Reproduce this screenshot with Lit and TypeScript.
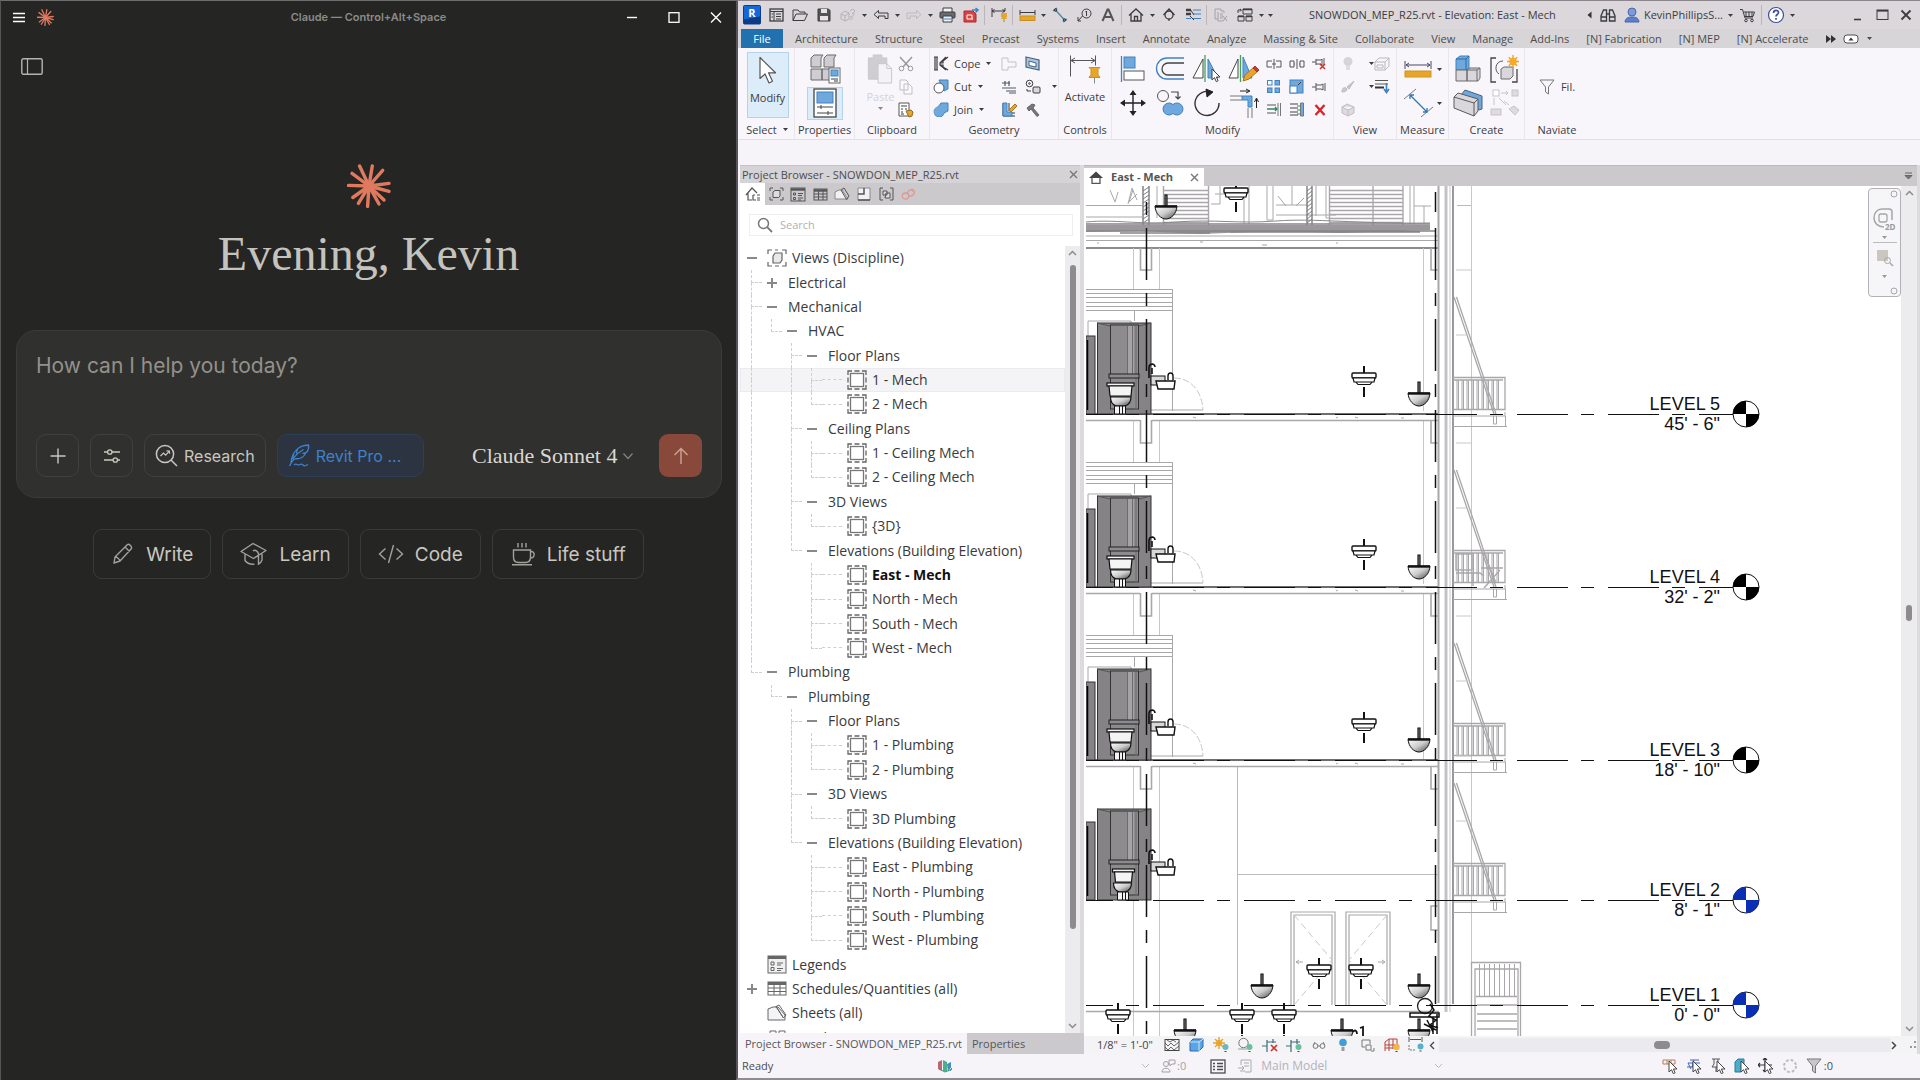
import { LitElement, html, svg, css, nothing, TemplateResult } from "lit";
import { customElement } from "lit/decorators.js";
import { classMap } from "lit/directives/class-map.js";

type Body = TemplateResult;

const icon = (w: number, h: number, body: Body) => html`<svg
  width=${w} height=${h} viewBox="0 0 ${w} ${h}" fill="none" stroke="currentColor" aria-hidden="true">${body}</svg>`;

const caret = html`<svg width="7" height="5" viewBox="0 0 7 5" aria-hidden="true"><path d="M1 1h5L3.500 4z" fill="currentColor"/></svg>`;

/* ---------- Claude icons ---------- */

const RAYS: [number, number][] = [
  [-9.4, -20], [3.3, -20], [13.7, -15.6], [20, -2.6], [20, 5.4], [15, 14],
  [10, 18], [-1.4, 20.4], [-10.6, 17.4], [-16.2, 11.5], [-20.6, -0.6], [-17, -12.6],
];
const sunburst = (size: number) => html`<svg width=${size} height=${size} viewBox="-22 -22 44 44" stroke="#e07a5f" fill="#e07a5f" stroke-width="3.4" stroke-linecap="round" aria-hidden="true">
  ${RAYS.map(([x, y]) => svg`<path d="M0 0L${x} ${y}"/>`)}<circle r="5.500" stroke="none"/></svg>`;

const C = {
  menu: icon(12, 11, svg`<path d="M0 1.500h12M0 5.500h12M0 9.500h12" stroke-width="1.600"/>`),
  min: icon(12, 11, svg`<path d="M1 5.500h10" stroke-width="1.400"/>`),
  max: icon(12, 11, svg`<rect x="1" y="0.700" width="10" height="9.600" stroke-width="1.300"/>`),
  close: icon(12, 11, svg`<path d="M1 .5l10 10M11 .5L1 10.500" stroke-width="1.400"/>`),
  sidebar: icon(22, 17, svg`<rect x=".8" y=".8" width="20.400" height="15.400" rx="1.500" stroke-width="1.400"/><path d="M6.500 1v15" stroke-width="1.200"/>`),
  plus: icon(18, 18, svg`<path d="M9 1.500v15M1.500 9h15" stroke-width="1.400"/>`),
  sliders: icon(18, 16, svg`<path d="M1 4h3.500M9 4h8M1 12h9M14.500 12H17" stroke-width="1.300"/><circle cx="6.800" cy="4" r="2.200" stroke-width="1.300"/><circle cx="12.300" cy="12" r="2.200" stroke-width="1.300"/>`),
  research: icon(23, 23, svg`<circle cx="10" cy="10" r="8.600" stroke-width="1.500"/><path d="M16.200 16.200L22 22" stroke-width="1.500"/><path d="M5.500 12l3-3 2.200 2.200 3.600-4M11.500 6.800l2.900.2.200 2.700" stroke-width="1.200"/>`),
  quill: icon(22, 23, svg`<path d="M3 18.500C4 9 9.500 1.500 20.500 1c.6 3-.4 5.500-2 7.500l-3 .8 1.700.7c-2 3.600-5.600 5-9.200 4.700-1.700.3-3 1.300-4 3L1.500 22M4.500 15C8 10.500 11 8 15.500 5.500M6 9.500l-1.600 4M9.500 5L8.300 9.500" stroke-width="1.300"/><path d="M6 21c2-2 3 0 4.500 0s2.500-2 4.500 0 3.500 0 5-.5" stroke-width="1.200"/>`),
  down: icon(12, 8, svg`<path d="M1.500 1.500L6 6.500l4.500-5" stroke-width="1.200"/>`),
  up: icon(16, 18, svg`<path d="M8 17V1.500M1.500 8L8 1.500 14.500 8" stroke-width="1.500"/>`),
  write: icon(24, 24, svg`<path d="M3 21l1-6L16.500 2.500c1.500-1 5 2.300 4 4L9 19zM14 5l4.500 4.500M4 15c1.500-.5 5 2.500 5 4" stroke-width="1.400" stroke-linejoin="round"/>`),
  learn: icon(28, 24, svg`<path d="M1 9.500L13 1.500l13 7-12.500 8zM5 12.500v6c2 2.700 6 4 9.500 3.600M22 12v6c-.6 1.700-1.600 3-3 3.700M13 9c2.500-2 5 .5 5.500 3v11" stroke-width="1.400" stroke-linejoin="round"/>`),
  code: icon(26, 22, svg`<path d="M7.500 5.500L1.500 11l6 5.500M18.500 5.500l6 5.500-6 5.500M15.500 2l-5 18" stroke-width="1.400"/>`),
  life: icon(26, 24, svg`<path d="M3.500 8h17v7c0 3.500-2 5.500-5 5.500H8.500c-3 0-5-2-5-5.500zM20.500 9.500c5-.8 5 6.500-.5 6.500M2 22.800h20M8 1v4.500M12 1v4.500M16 1v4.500" stroke-width="1.400"/>`),
};

/* ---------- Revit icons ---------- */

const B = "#6fa8dc";
const BD = "#3f83c2";
const OR = "#e7a52b";

const Q: Record<string, TemplateResult> = {
  logo: icon(18, 20, svg`<rect x=".5" y=".5" width="17" height="18.500" rx="1" fill="#1668d6" stroke="#0b3c98"/><path d="M1 14.500l16-3V19H1z" fill="#0b3a86" stroke="none"/><text x="9" y="12" font-size="11" font-weight="700" text-anchor="middle" fill="#fff" stroke="none">R</text>`),
  start: icon(15, 14, svg`<rect x="1" y="1" width="13" height="12" stroke-width="1.300"/><path d="M1 3.500h13M5 3.500V13M7 6h5M7 8.500h5M7 11h5M2.500 6h1.500M2.500 9h1.500" />`),
  open: icon(16, 14, svg`<path d="M1 12.500V2h5l1.500 2H13v2M1 12.500L4 6h11.500l-3 6.500z"/>`),
  save: icon(14, 14, svg`<path d="M1 1h10.500L13 2.500V13H1z" fill="#555"/><rect x="4" y="1" width="6" height="4" fill="#e6e4e7" stroke="none"/><rect x="3" y="8" width="8" height="4.500" fill="#e6e4e7" stroke="none"/>`),
  sync: icon(16, 14, svg`<g stroke="#b5b2b7"><path d="M1 6l4-3 4 2v6l-4 2-4-2zM1 6l4 2 4-3M5 8v5"/><path d="M10 3l3-2 2 2-3 3M10 9c3 0 4-2 4-4M10 12l3-2"/></g>`),
  undo: icon(16, 12, svg`<path d="M5.500 1.500L1 5.500l4.500 4V7H12v2.500h3V4H5.500z"/>`),
  redo: icon(16, 12, svg`<path d="M10.500 1.500L15 5.500l-4.500 4V7H4v2.500H1V4h9.500z" stroke="#bdbabf"/>`),
  print: icon(17, 16, svg`<path d="M4 5V1h9v4" fill="#f2f2f2"/><rect x="1" y="5" width="15" height="6" rx="1" fill="#6b6b6b"/><path d="M4 9h9v6H4z" fill="#e9f1f8"/><path d="M5 12h7" stroke="${BD}"/>`),
  pdf: icon(16, 16, svg`<path d="M1 4h9l3 3v8H1z" fill="#d64545" stroke="#b02a2a"/><path d="M4 8h5M4 12h6M4 8v4M9 8v4" stroke="#fff"/><path d="M9 3h6M12.500 1L15 3l-2.500 2.500" stroke="${BD}" stroke-width="1.500"/>`),
  dim: icon(17, 16, svg`<path d="M1 1v9M14 1v3M1 4h13M3.500 2.500L1 4l2.500 1.500M11.500 2.500L14 4l-2.500 1.500"/><path d="M10 6h6v4h-1l1 2h-6l1-2h-1z" fill="${OR}" stroke="none"/><path d="M13 12v3" stroke="#888"/>`),
  measure: icon(17, 12, svg`<path d="M1 1v5M16 1v5M1 3.500h15"/><rect x="1" y="7" width="15" height="4.500" fill="${OR}" stroke="#c98f1c"/>`),
  aligned: icon(16, 16, svg`<path d="M1 4l4-3M11 15l4-3M3 2.500l10 11" stroke="#4d86a8" stroke-width="1.300"/><circle cx="3.500" cy="3" r="1.300" fill="#4d86a8"/><circle cx="12.500" cy="13" r="1.300" fill="#4d86a8"/>`),
  tag: icon(15, 14, svg`<circle cx="9.500" cy="5.500" r="4.500"/><path d="M9.500 3v5M8.500 4l1-1M5.500 8L1 13M1 9v4h3"/>`),
  text: icon(14, 14, svg`<path d="M1.500 13L6.500 1.500h1L12.500 13M3.800 9h6.500" stroke="#555" stroke-width="2"/>`),
  home: icon(16, 14, svg`<path d="M1 7.500L8 1l7 6.500M3 6v7h10V6M6.500 13V8.500h3V13" stroke-width="1.300"/>`),
  section: icon(14, 14, svg`<circle cx="7" cy="7" r="4" stroke-width="1.300"/><path d="M1.500 7L7 1l5.500 6M7 11v2" stroke-width="1.200"/>`),
  thin: icon(17, 14, svg`<path d="M1 2h5M1 6h5" stroke-width="2.500"/><path d="M8 2h8M8 6h8M8 10.500h8M1 10.500h5" stroke="${BD}"/><path d="M5 1l4 6 M5 8l4 4"/>`),
  closeWin: icon(14, 14, svg`<g stroke="#a5a2a7"><path d="M1 1h6v2h3v2M1 1v10h3M4 4v9h5M6 6h3M6 8h3M6 10h3M9 8l4 5M13 8l-4 5"/></g>`),
  switchWin: icon(17, 14, svg`<path d="M6 1h9v5H6zM1 8h6v5H1zM9 8h6v5H9zM1 5V2h3M3 1l1.500 1L3 3.500"/><path d="M1 8.500h6M9 8.500h6M6 1.500h9" stroke-width="1.600"/>`),
  binoc: icon(16, 14, svg`<path d="M1 13V8l2.500-6h3v11zM15 13V8l-2.500-6h-3v11zM6.500 6h3M1 9h5.500M9.500 9H15" stroke-width="1.300"/>`),
  user: icon(16, 16, svg`<circle cx="8" cy="5" r="4" fill="#7d9bd8" stroke="#4a66a8"/><path d="M1 15c.5-4 3-5 7-5s6.500 1 7 5z" fill="#5b7fcb" stroke="#4a66a8"/>`),
  cart: icon(17, 15, svg`<path d="M1 1.500h2.500L6 10h8M4.500 4H15.500L14 8.500H6M7 4v4.500M10 4v4.500M13 4v4.500"/><circle cx="7" cy="12.500" r="1.300"/><circle cx="13" cy="12.500" r="1.300"/>`),
  help: icon(18, 18, svg`<circle cx="9" cy="9" r="7.500" fill="#fff" stroke="#3a4f9c" stroke-width="1.200"/><path d="M6.500 7c0-3.500 5-3.300 5-.5C11.500 8.500 9 8.500 9 10.500M9 12v1.700" stroke="#3a4f9c" stroke-width="1.700"/>`),
  wmin: icon(12, 12, svg`<path d="M2 10.500h7" stroke-width="1.600"/>`),
  wmax: icon(13, 12, svg`<rect x="1" y="1" width="11" height="9.500"/><path d="M1 1.800h11" stroke-width="1.600"/>`),
  wclose: icon(12, 12, svg`<path d="M1.500 1.500l9 9M10.500 1.500l-9 9" stroke-width="1.800"/>`),
};

const cursorPath = (x: number, y: number) => svg`<path transform="translate(${x} ${y})" d="M0 0v11l2.500-2.300 1.800 4 1.800-.9-1.700-3.800H8z" fill="#fff" stroke="#444"/>`;

const R: Record<string, TemplateResult> = {
  modify: icon(22, 30, svg`<path d="M3 2v21l5-4.500 4 9 3.500-1.700-4-8.500h7z" fill="#fff" stroke="#555" stroke-width="1.200" stroke-linejoin="round"/>`),
  families: icon(32, 30, svg`<g fill="#cfcdd1" stroke="#6a6a6a"><path d="M2 4l3-3h9l-2 3v9H2zM15 4l3-3h9l-2 3v9H15z"/><path d="M2 15h11v11H2zM13 15h10v11H13z"/></g><rect x="20" y="14" width="11" height="15" fill="#fff" stroke="#666"/><rect x="22" y="16" width="7" height="6" fill="${B}" stroke="${BD}"/><path d="M22 25h7M25 27h4"/>`),
  props: icon(24, 30, svg`<rect x="1" y="1" width="22" height="28" fill="#fff" stroke="#444" stroke-width="1.300"/><rect x="4" y="4" width="16" height="11" fill="${B}" stroke="${BD}"/><path d="M4 19h16M4 25h16M8 17v4M15 23v4" stroke="#444"/>`),
  paste: icon(26, 32, svg`<g stroke="#c9c7cc"><path d="M1 4h5V1h9v3h5v22H1z" fill="#cfcdd2"/><path d="M11 10h9l5 5v15H11z" fill="#f3f2f5"/><path d="M20 10v5h5"/></g>`),
  cut: icon(16, 16, svg`<path d="M2 1l9 10M14 1L5 11" stroke="#999" stroke-width="1.500"/><circle cx="3.500" cy="12.500" r="2.300" stroke="#999"/><circle cx="12.500" cy="12.500" r="2.300" stroke="#999"/>`),
  copyS: icon(14, 16, svg`<path d="M1 1h6l2 2v8H1zM5 5h5l3 3v7H5z" stroke="#c0bec3" fill="#fafafa"/>`),
  match: icon(16, 16, svg`<path d="M1 1h10v13H1z" fill="#fff" stroke="#555"/><path d="M3 4h6M3 7h2M3 10h2M7 7h2M3 12h3"/><path d="M8 9l5-1 2 2-1 4-3 1z" fill="${OR}" stroke="#8a6a20"/>`),
  cope: icon(16, 15, svg`<path d="M1 1h4M1 14h4M2 1v13M4 1v13M15 1l-5 4v2l-3 0v2h3v2l5 3M7 7L13 1M7 9l6 5" stroke-width="1.200"/>`),
  cutG: icon(16, 15, svg`<path d="M6 1h9v9l-4 2z" fill="${B}" stroke="${BD}"/><circle cx="6" cy="9" r="5" fill="#fff" stroke="#555"/>`),
  joinG: icon(16, 15, svg`<path d="M8 1h7v8l-4 2a5 5 0 1 1-6-6z" fill="${B}" stroke="${BD}"/><circle cx="6" cy="9.500" r="5" fill="${B}" stroke="none"/>`),
  g1: icon(16, 14, svg`<path d="M1 1h6v4h8v5H7v3H1z" stroke="#c3c1c6"/>`),
  g2: icon(16, 14, svg`<path d="M1 3h8M4 1v5M8 1v5M1 8h14M5 11h10M8 13h7" stroke="#4a5a6a" stroke-width="1.200"/>`),
  g3: icon(17, 16, svg`<path d="M2 1v13h12M5 3v8h9M8 1v8" stroke="#333"/><path d="M2 1v13h9v-4H6V1z" fill="${B}" stroke="${BD}"/><path d="M8 8l6-6 2 2-6 6z" fill="${OR}" stroke="#a87520"/>`),
  g4: icon(15, 15, svg`<path d="M1 1l13 3v10L1 11z" fill="#a9c7e4" stroke="#47617c" stroke-width="1.200"/><path d="M4 5l7 2v4l-7-1.500z" fill="#fff" stroke="#47617c"/>`),
  g5: icon(16, 15, svg`<circle cx="4.500" cy="4.500" r="3.300"/><circle cx="4.500" cy="4.500" r=".8"/><rect x="8" y="8" width="7" height="6" rx="1" fill="#d9d7dc"/><path d="M2 10v2h4"/>`),
  hammer: icon(14, 14, svg`<path d="M1 5l5-4 3 1-2 3 6 7-2 1.500L5 6 3 8z" fill="#777" stroke="#666"/>`),
  activate: icon(32, 30, svg`<path d="M1.500 1v21M26.500 1v10M2 6h24M6 3.500L2 6l4 2.500M22 3.500L26 6l-4 2.500" stroke="#555"/><path d="M20 13h11l-2 2v5l2 3H20l2-3v-5z" fill="${OR}" stroke="#d09018"/><path d="M25.500 23v6" stroke="#888"/>`),
  align: icon(26, 28, svg`<path d="M1.500 1v26" stroke="${BD}" stroke-width="1.300"/><rect x="4" y="2" width="11" height="11" fill="${B}" stroke="${BD}"/><rect x="4" y="16" width="20" height="9" fill="#fff" stroke="#555"/>`),
  offset: icon(30, 26, svg`<path d="M29 2H12a10.500 10.500 0 0 0 0 21h17" stroke="${BD}" stroke-width="1.300"/><path d="M29 7H13a6 6 0 0 0 0 12h16" stroke="#444" stroke-width="1.300"/>`),
  mirrorP: icon(30, 30, svg`<path d="M11 5v19H1z" stroke="#444" fill="#fff"/><path d="M13 1v27" stroke="#3fa35b" stroke-width="1.300"/><path d="M16 5l10 19H16z" fill="${B}" stroke="${BD}"/>${cursorPath(20, 15)}`),
  mirrorD: icon(32, 30, svg`<path d="M10 5v19H1z" stroke="#444" fill="#fff"/><path d="M12.500 1v27" stroke="#3fa35b" stroke-width="1.300"/><path d="M15 3l9 21h-9z" fill="${B}" stroke="${BD}"/><path d="M15 27l2-6 9-8 4 4-9 8z" fill="${OR}" stroke="#a87520"/><path d="M25 14l2-2 4 4-2 2z" fill="#c43c3c" stroke="#a33"/>`),
  move: icon(26, 26, svg`<path d="M13 4v18M4 13h18" stroke="#222" stroke-width="1.400"/><path d="M13 0l3.500 5h-7zM13 26l-3.500-5h7zM0 13l5-3.500v7zM26 13l-5 3.500v-7z" fill="#222" stroke="none"/>`),
  copy: icon(28, 28, svg`<circle cx="7" cy="7" r="5.500" stroke="#555"/><path d="M15 3h7v7M19.500 7.500L22 10l2.500-2.500" stroke="#444" stroke-width="1.200"/><path d="M7 20a6 6 0 0 1 10-4.500A6 6 0 1 1 17 24.500 6 6 0 0 1 7 20z" fill="${B}" stroke="${BD}"/>`),
  rotate: icon(28, 30, svg`<path d="M19 4.500A12 12 0 1 0 26 15" stroke="#333" stroke-width="1.400"/><path d="M13 1l7 3-6 5z" fill="#222" stroke="#222"/>`),
  trim: icon(30, 30, svg`<path d="M11 3h9M17 1l4 2-4 2" stroke="#222"/><path d="M1 8h12M1 12h12M19 20v10M23 20v10" stroke="#777"/><path d="M13 8h10v11h-4v-7h-6z" fill="${B}" stroke="${BD}"/><path d="M27.500 20v-9M25.500 14l2-4 2 4" stroke="#222"/>`),
  s1: icon(16, 10, svg`<path d="M6 2H1v6h5M10 2h5v6h-5M8 0v10M6 5h4" stroke="#555"/>`),
  s2: icon(16, 10, svg`<path d="M1 2h4v6H1zM11 2h4v6h-4zM8 0v10M5 5h1M10 5h1" stroke="#555"/>`),
  s3: icon(16, 14, svg`<path d="M0 5h4M4 2v6M4 3h5l1-1v6l-1-1H4M12 1v7" stroke="#555"/><path d="M8 7l5 5M13 7l-5 5" stroke="#d32f2f" stroke-width="1.500"/>`),
  s4: icon(15, 15, svg`<rect x="1.500" y="1.500" width="4.500" height="4.500" fill="#fff" stroke="${BD}"/><g fill="${B}" stroke="${BD}"><rect x="9" y="1.500" width="4.500" height="4.500"/><rect x="1.500" y="9" width="4.500" height="4.500"/><rect x="9" y="9" width="4.500" height="4.500"/></g>`),
  s5: icon(15, 15, svg`<rect x="1" y="1" width="13" height="13" fill="${B}" stroke="${BD}"/><rect x="1" y="7" width="7" height="7" fill="#fff" stroke="${BD}"/><path d="M9 6l3-3"/>`),
  s6: icon(16, 12, svg`<path d="M0 6h4M4 2v8M4 4h5l2-1v6l-2-1H4M13 2v8" stroke="#555"/>`),
  s7: icon(16, 15, svg`<path d="M1 3h9M1 11h9" stroke="#555"/><path d="M1 7h10M9 5l2 2-2 2" stroke="#2d8a5b" stroke-width="1.300"/><path d="M12 1v13M14.500 1v13" stroke="#777"/>`),
  s8: icon(16, 15, svg`<path d="M1 2h8M1 6h8M1 10h8M1 13h8" stroke="#444"/><path d="M8 4h3M8 8h3M8 12h3" stroke="#2d8a5b"/><path d="M11.500 1h3v13h-3z" fill="${B}" stroke="#777"/>`),
  s9: icon(12, 12, svg`<path d="M1.500 1l9 10M10.500 1l-9 10" stroke="#d7262b" stroke-width="2.400"/>`),
  bulb: icon(12, 15, svg`<circle cx="6" cy="5.500" r="4.500" fill="#d6d4d9" stroke="none"/><path d="M4 11h4M4 13h4" stroke="#c6c4c9"/>`),
  box: icon(16, 14, svg`<path d="M1 5l4-4h10v8l-4 4H1zM1 5h10l4-4M11 5v8M3 8h6v3H3z" stroke="#b9b7bc"/>`),
  brush: icon(14, 13, svg`<path d="M1 12c0-4 2-5 4-4s1 4-4 4zM6 7l7-6-5 8z" fill="#c9c7cc" stroke="#bbb"/>`),
  linew: icon(16, 15, svg`<path d="M1 1.500h13M1 5h13" stroke="#555"/><path d="M1 8.500h9" stroke="#333" stroke-width="2"/><path d="M12.500 4v9M10 10l2.500 3.500L15 10" stroke="${BD}" stroke-width="1.600"/>`),
  cube: icon(14, 14, svg`<path d="M1 4l5-3 7 3v6l-6 3-6-3zM1 4l6 3 6-3M7 7v6" fill="#dddbe0" stroke="#bfbdc2"/>`),
  ruler: icon(28, 18, svg`<path d="M1 1v8M27 1v8M2 5h24M5 3L2 5l3 2M23 3l3 2-3 2" stroke="#47476a"/><rect x="1" y="11" width="26" height="6" fill="${OR}" stroke="#cf941f"/>`),
  diag: icon(32, 32, svg`<path d="M2 12l12-10M19 30l12-10" stroke="#777"/><path d="M8 8l17 17M8 12V8h4M21 25h4v-4" stroke="#2f78b7" stroke-width="1.300"/>`),
  create1: icon(28, 28, svg`<path d="M2 4l4-3h9v12l-3 2H2z" fill="${B}" stroke="${BD}"/><path d="M2 4h10v11M12 4l3-3" stroke="#2b6aa8"/><path d="M2 15h11v11H2zM13 15l3-2h10v10l-2 3H13z" fill="#d9d7db" stroke="#6a6a6a"/><path d="M13 15h10l3-2M23 15v11" stroke="#6a6a6a"/>`),
  create2: icon(30, 28, svg`<path d="M6 3H1v24h5M22 27h5V14" stroke="#444" stroke-width="1.300"/><path d="M13 6c-8 0-9 10-4 13" stroke="#555"/><path d="M11 14l3-2h9v9l-3 3h-9z" fill="#d9d7db" stroke="#6a6a6a"/><path d="M23 0v13M17 6.500h12M18.800 2.300l8.400 8.400M27.200 2.300l-8.400 8.400" stroke="#f0a02c" stroke-width="1.400"/><circle cx="23" cy="6.500" r="3.700" fill="#f7a928" stroke="none"/>`),
  create3: icon(30, 28, svg`<path d="M8 6L12 1l17 6v13l-3 1z" fill="${B}" stroke="#47617c"/><path d="M1 8l20 6v13L1 19zM1 8l4-4 20 6v12l-4 5M21 14l4-4" fill="#d9d7db" stroke="#5a5a5a"/>`),
  create4: icon(30, 28, svg`<g stroke="#c6c4c9" fill="#dddbe0"><rect x="3" y="1" width="6" height="6" fill="#fff"/><path d="M11 4h7M16 2l2 2-2 2" fill="none"/><rect x="22" y="1" width="6" height="6"/><path d="M4 9v7M9 9l7 7" fill="none"/><rect x="1" y="20" width="10" height="6"/><path d="M19 20l5-3 5 4-4 5z"/><path d="M14 12l5 4"/></g>`),
  funnel: icon(16, 16, svg`<path d="M1 1h14L9.500 8v7L6.500 13V8z" stroke="#777"/>`),
};

const P: Record<string, TemplateResult> = {
  house: icon(16, 14, svg`<path d="M1 8l6-7 5 5M3 6v7h4M8 8h2M8 8v5h3M12 8h3M12 11h3M12 13h3" stroke-width="1.200"/>`),
  views: icon(15, 14, svg`<path d="M1 4V1h3M11 1h3v3M14 10v3h-3M4 13H1v-3"/><path d="M4 5l2-1.500h5V9l-1.500 1.500H4z" fill="#ddd"/>`),
  legend: icon(16, 15, svg`<rect x="1" y="1" width="14" height="13"/><path d="M1 2.500h14" stroke-width="2.400"/><path d="M3.500 6h2v2h-2zM3.500 10.500h2v2h-2zM8 6.500h5M8 8.500h4M8 11h5M8 13h3"/>`),
  schedule: icon(15, 13, svg`<rect x="1" y="1" width="13" height="11"/><path d="M1 2.500h13" stroke-width="2.400"/><path d="M1 6h13M1 9h13M5.500 3v9M10 3v9"/>`),
  sheet: icon(16, 14, svg`<path d="M1 12V5l4-2h3l6 9z" fill="#f2f1f3" stroke="#8a888c"/><path d="M7 3l3-2 5 8-2.500 3.500z"/>`),
  family: icon(14, 14, svg`<path d="M1 1h12v12H1z" fill="#f2f1f3" stroke="#8a888c"/><path d="M1 7h6V1M1 13h12" stroke-width="1.500"/>`),
  group: icon(15, 14, svg`<path d="M4 1H1v12h3M11 1h3v12h-3"/><path d="M4 4h4v4H4zM7 6h4v5H6z" fill="#ddd"/>`),
  link: icon(15, 12, svg`<g stroke="#dd9a95" stroke-width="1.300"><ellipse cx="4.500" cy="8" rx="3.300" ry="3"/><path d="M6 6.500C7 1 13 0 13.500 3.500S9 9 8 7.500M10 1l2 3"/></g>`),
  search: icon(16, 16, svg`<circle cx="6.500" cy="6.500" r="5" stroke-width="1.500"/><path d="M10.200 10.200L15 15" stroke-width="1.800"/>`),
  viewsBig: icon(20, 18, svg`<path d="M1 5V1h4M8 1h3M15 1h4v4M19 13v4h-4M12 17H8M5 17H1v-4" stroke-width="1.200"/><path d="M6 7l2-3h7v7l-2 3H6z" fill="#e9e8ea" stroke-width="1.200"/>`),
  view: icon(20, 20, svg`<path d="M1 5V1h4M15 1h4v4M19 15v4h-4M5 19H1v-4M7.500 1h5M7.500 19h5M1 7.500v5M19 7.500v5" stroke="#666" stroke-width="1.300"/><rect x="3.500" y="3.500" width="13" height="13" stroke="#777" stroke-width="1.300" fill="#fff"/>`),
  legendBig: icon(20, 19, svg`<rect x="1" y="1" width="18" height="17" fill="#f0eff1"/><path d="M1 2.500h18" stroke-width="3"/><path d="M4 7h3v3H4zM4 12.500h3v3H4zM10 8h6M10 10h4M10 13.500h6M10 15.500h4"/>`),
  scheduleBig: icon(20, 16, svg`<rect x="1" y="1" width="18" height="13"/><path d="M1 2.500h18" stroke-width="3"/><path d="M1 7h18M1 10.500h18M7 3v11M13 3v11"/>`),
  sheetBig: icon(20, 18, svg`<path d="M1 16V5l5-2h5l7 8v5z" fill="#f4f3f5"/><path d="M9 2.500l3-1.500 7 10-2.500 3zM9 2.500L16.500 14"/>`),
  familyBig: icon(20, 16, svg`<path d="M3 1h6v14H3zM12 1h6v14h-6zM3 6h6M12 6h6"/>`),
};

const V: TemplateResult[] = [
  icon(16, 14, svg`<rect x="1" y="1.500" width="14" height="11"/><path d="M1 5l3 3 3-3 3 3 5-4M1 9l3 3 3-3 3 3 5-4M3 2l3 2 3-2 3 2" stroke-width=".8"/>`),
  icon(15, 14, svg`<path d="M1 4l3-3h10v8l-4 4H1z" fill="#5aa5e6" stroke="#2f6ba8"/><path d="M1 4h9v9M10 4l4-3" stroke="#cfe5f8"/>`),
  icon(17, 16, svg`<path d="M6 0v12M0 6h12M2 2l8 8M10 2l-8 8" stroke="#e7a52b" stroke-width="1.400"/><circle cx="6" cy="6" r="3" fill="#e7a52b" stroke="none"/><circle cx="12.500" cy="10" r="3" fill="#6bb6c4" stroke="none"/><path d="M11.500 14.500h2"/>`),
  icon(17, 16, svg`<circle cx="6.500" cy="6" r="4.700" stroke="#777"/><path d="M1 12h9" stroke="#999"/><circle cx="12.500" cy="10" r="3" fill="#6bbf9f" stroke="none"/><path d="M11.500 14.500h2"/>`),
  icon(17, 16, svg`<path d="M0 9h5V5h9M5 3v12M11 2v4" stroke="#3d6d77" stroke-width="1.200"/><path d="M9 8l6 6M15 8l-6 6" stroke="#d32f2f" stroke-width="1.700"/>`),
  icon(17, 16, svg`<path d="M0 9h5V5h9M5 3v12M11 2v5" stroke="#3d6d77" stroke-width="1.200"/><circle cx="12.500" cy="10" r="3" fill="#6bbf9f" stroke="none"/><path d="M11.500 14.500h2"/>`),
  icon(14, 8, svg`<g stroke="#777"><circle cx="3.500" cy="5" r="2.400"/><circle cx="10.500" cy="5" r="2.400"/><path d="M6 5h2M1.500 3.500L3 1M12.500 3.500L11 1"/></g>`),
  icon(10, 14, svg`<circle cx="5" cy="4.500" r="3.800" fill="#3f9fd8" stroke="none"/><path d="M3.500 10h3M3.500 12h3"/>`),
  icon(14, 13, svg`<path d="M1 1h8v4M1 1v7h3M5 6h5v5H5z" stroke="#777"/><path d="M10 12h3V9" stroke="#777"/>`),
  icon(17, 16, svg`<path d="M1 14V5l4-3h8v6M1 8h10M1 11h8M5 2v12M9 2v10" stroke="#b5443b"/><circle cx="12.500" cy="10" r="3.200" fill="#f0b64a" stroke="none"/><path d="M11.500 14.500h2"/>`),
  icon(17, 16, svg`<path d="M1 0v5M14 0v5M2 2.500h11" stroke="#555"/><path d="M1 8v5h7" stroke="#777" stroke-dasharray="2 1"/><circle cx="12.500" cy="9.500" r="3" fill="#5bb0c9" stroke="none"/><path d="M11.500 14h2"/>`),
];

const S: TemplateResult[] = [
  icon(16, 16, svg`<path d="M1 2h12v4H1zM5 2v4M9 2v4" stroke="#c07b55"/>${cursorPath(7, 3)}`),
  icon(16, 16, svg`<path d="M2 5h12M1 9h11M4 2h9M2 5l3 6M8 2L6 9" stroke="#3d62b5"/>${cursorPath(7, 3)}`),
  icon(16, 16, svg`<path d="M2 1h8M4 1v5L2 9h8L8 6V1M6 9v5" stroke="#555"/>${cursorPath(7, 3)}`),
  icon(16, 16, svg`<path d="M1 4l3-3h6v10l-3 3H1z" fill="#49aecb" stroke="#2c7a92"/>${cursorPath(7, 3)}`),
  icon(16, 16, svg`<path d="M7 0v14M0 7h14M5 2l2-2 2 2M2 5L0 7l2 2M5 12l2 2" stroke="#333" stroke-width="1.200"/>${cursorPath(7, 3)}`),
  icon(16, 16, svg`<circle cx="8" cy="8" r="6" stroke="#bbb" stroke-width="2" stroke-dasharray="2.700 2"/>`),
];

/* ---------- Project browser data ---------- */

interface Row {
  g: string; // guide cells: v = line, t = tee, l = elbow, . = blank
  label: string;
  tog?: "+" | "-";
  ic?: keyof typeof P;
  bold?: boolean;
  hot?: boolean;
}
const leaf = (g: string, label: string, extra: Partial<Row> = {}): Row => ({ g, label, ic: "view", ...extra });
const ROWS: Row[] = [
  { g: "", label: "Views (Discipline)", tog: "-", ic: "viewsBig" },
  { g: "t", label: "Electrical", tog: "+" },
  { g: "t", label: "Mechanical", tog: "-" },
  { g: "vl", label: "HVAC", tog: "-" },
  { g: "v.t", label: "Floor Plans", tog: "-" },
  leaf("v.vt", "1 - Mech", { hot: true }),
  leaf("v.vl", "2 - Mech"),
  { g: "v.t", label: "Ceiling Plans", tog: "-" },
  leaf("v.vt", "1 - Ceiling Mech"),
  leaf("v.vl", "2 - Ceiling Mech"),
  { g: "v.t", label: "3D Views", tog: "-" },
  leaf("v.vl", "{3D}"),
  { g: "v.l", label: "Elevations (Building Elevation)", tog: "-" },
  leaf("v..t", "East - Mech", { bold: true }),
  leaf("v..t", "North - Mech"),
  leaf("v..t", "South - Mech"),
  leaf("v..l", "West - Mech"),
  { g: "l", label: "Plumbing", tog: "-" },
  { g: ".l", label: "Plumbing", tog: "-" },
  { g: "..t", label: "Floor Plans", tog: "-" },
  leaf("..vt", "1 - Plumbing"),
  leaf("..vl", "2 - Plumbing"),
  { g: "..t", label: "3D Views", tog: "-" },
  leaf("..vl", "3D Plumbing"),
  { g: "..l", label: "Elevations (Building Elevation)", tog: "-" },
  leaf("...t", "East - Plumbing"),
  leaf("...t", "North - Plumbing"),
  leaf("...t", "South - Plumbing"),
  leaf("...l", "West - Plumbing"),
  { g: ".", label: "Legends", ic: "legendBig" },
  { g: "", label: "Schedules/Quantities (all)", tog: "+", ic: "scheduleBig" },
  { g: ".", label: "Sheets (all)", ic: "sheetBig" },
  { g: "", label: "Families", tog: "+", ic: "familyBig" },
];

/* ---------- Elevation drawing ---------- */

const G = "#a9a7aa";
const L = "#c9c7ca";
const range = (a: number, b: number, s: number) => {
  const out: number[] = [];
  for (let v = a; v <= b; v += s) out.push(v);
  return out;
};

/** Wall-hung sink seen from the front; y is the floor it belongs to. */
const sinkFront = (x: number, y: number) => svg`<g transform="translate(${x} ${y})" stroke="#111" fill="#fff">
  <path d="M0-48v7M0-27v10" stroke-width="2"/><rect x="-12" y="-41" width="24" height="5" rx="1" stroke-width="1.400"/>
  <path d="M-11-36h22l-1 4H-10zM-8-32h16l-2 2.500H-6z" stroke-width="1.200"/></g>`;

/** Half-dome basin with its tap. */
const basin = (x: number, y: number) => svg`<g transform="translate(${x} ${y})" stroke="#111">
  <path d="M-1-32h2v11h-2z" fill="#999" stroke-width="1.200"/><path d="M-11-21h22C10.500-13 5-8 0-8S-10.500-13-11-21z" fill="url(#dome)" stroke-width="1"/>
  <path d="M-11-20.500h22" stroke-width="2.400"/></g>`;

const toilet = (x: number, y: number, w: number) => svg`<g transform="translate(${x} ${y})" stroke="#111" fill="#f4f4f4">
  <rect x=${-w} y="-31" width=${2 * w} height="3" stroke-width="1.200"/><path d="M${-w + 2}-28h${2 * w - 4}l-1 10H${-w + 3}z" stroke-width="1.200"/>
  <path d="M${-w + 3}-17h${2 * w - 6}c0 5-3 8-6 9H-4c-4-1-6-4-6-9z" fill="url(#dome)" stroke-width="1.200"/>
  <path d="M-6-8h11v8H-6zM-1-8v8M2-8v8" stroke-width="1"/></g>`;

const closet = (b: number, last = false) => svg`<g>
  <rect x="1086" y=${b - 78} width="9" height="78" fill="#868487" stroke="#333"/>
  <path d="M1087.500 ${b - 74}v70" stroke="#000" stroke-width="1.500"/>
  <rect x="1097.500" y=${b - 91} width="53.500" height="91" fill="#858386" stroke="#333"/>
  <path d="M1097 ${b - 91}l13 3M1139 ${b - 88}l12-3" stroke="#555"/>
  <rect x="1110.500" y=${b - 89} width="28" height="84" fill="#8d8b8e" stroke="#333"/>
  <rect x="1127" y=${b - 88} width="7" height="49" fill="#a5a3a6"/>
  <path d="M1127.500 ${b - 88}v49M1132.500 ${b - 88}v49M1136 ${b - 88}v84" stroke="#6c6a6d"/>
  <rect x="1109" y=${b - 40} width="30" height="4" fill="#8d8b8e" stroke="#222"/>
  ${toilet(last ? 1123.5 : 1120.5, b, last ? 11 : 13.5)}
  <g transform="translate(0 ${b})" fill="#fff" stroke="#111">
    <path d="M1149-36v-10c0-5 6-5 6-1M1152-40v-6" fill="none" stroke-width="1.600"/>
    <rect x="1151" y="-38" width="14" height="9" fill="#d8d8d8"/>
    <path d="M1156-33h19l-1 8h-16zM1168-34v-4c0-4 5-4 5 0v4" stroke-width="1.400"/>
  </g></g>`;

const shaft = (b: number) => svg`<g stroke=${G}>
  ${[125, 121, 117, 112, 108, 104].map((d) => svg`<path d="M1086 ${b - d + 0.5}h87"/>`)}
  <path d="M1172.500 ${b - 125}V${b - 3}M1134.500 ${b - 104}v11M1088 ${b - 78}v-15h43v4M1151 ${b - 4}h52" />
  <path d="M1174 ${b - 36}c16 0 28 12 29 32" stroke=${L} stroke-dasharray="7 2"/></g>`;

const slab = (b: number) => svg`<g stroke=${G}>
  <path d="M1086 ${b}h352" stroke="#6f6d70" stroke-width="2"/>
  <path d="M1086 ${b + 6.5}h54M1152 ${b + 6.5}h286" stroke-width="1.500"/>
  <path d="M1140.500 ${b + 6}v23h11v-23M1431 ${b + 6}v23h7" stroke-width="1.600"/>
  <path d="M1193 ${b + 3}l3 1M1336 ${b + 4}l2-1M1355 ${b + 3}l3 1M1401 ${b + 4}h3"/></g>`;

const balcony = (b: number) => svg`<g stroke=${G}>
  <path d="M1453 ${b - 36.5}h52v32h-52M1453 ${b - 34}h50" stroke-width="1.300"/>
  ${range(1457, 1501, 5).map((x) => svg`<path d="M${x} ${b - 34}v29M${x + 1.5} ${b - 34}v29"/>`)}
  <path d="M1453 ${b + 2}h52v-4M1453 ${b + 12.5}h54M1505.500 ${b + 2}v10M1493.500 ${b + 2}v8h3v-8"/>
  <path d="M1454 ${b - 117}L1494 ${b}M1456.500 ${b - 117}L1496 ${b}" stroke-width="1.300"/>
  <path d="M1456 ${b - 144}h15M1456 ${b - 79}h12" stroke=${L}/></g>`;

const door = (x: number, flip: boolean) => svg`<g stroke=${G}>
  <path d="M${x} 1005V912h44v93M${x + 3} 1005V915h38v90" stroke-width="1.200"/>
  <path d=${flip ? `M${x + 41} 915L${x + 3} 960L${x + 41} 1005` : `M${x + 3} 915L${x + 41} 960L${x + 3} 1005`} stroke=${L} stroke-dasharray="7 4"/>
  <path d=${flip ? `M${x + 32} 962h7M${x + 36} 960l3 2-3 2` : `M${x + 5} 962h7M${x + 8} 960l-3 2 3 2`}/></g>`;

const LEVELS = [
  { y: 414, name: "LEVEL 5", h: `45' - 6"`, c: "#000" },
  { y: 587, name: "LEVEL 4", h: `32' - 2"`, c: "#000" },
  { y: 760, name: "LEVEL 3", h: `18' - 10"`, c: "#000" },
  { y: 900, name: "LEVEL 2", h: `8' - 1"`, c: "#0b2fb4" },
  { y: 1005, name: "LEVEL 1", h: `0' - 0"`, c: "#0b2fb4" },
];

const level = (l: (typeof LEVELS)[number]) => svg`<g>
  <path d="M1086 ${l.y + 0.5}H1733" stroke="#111" stroke-width="1.200" stroke-dasharray="51 13 13 14" stroke-dashoffset="24"/>
  <circle cx="1746" cy=${l.y} r="13" fill="#fff" stroke="#111"/>
  <path d="M1746 ${l.y}v-13a13 13 0 0 0-13 13zM1746 ${l.y}v13a13 13 0 0 0 13-13z" fill=${l.c}/>
  <text x="1720" y=${l.y - 4} text-anchor="end">${l.name}</text>
  <text x="1720" y=${l.y + 16} text-anchor="end">${l.h}</text></g>`;

const roof = svg`<g stroke=${G}>
  ${range(190, 222, 4).map((y) => svg`<path d="M1163 ${y + 0.5}h45M1329 ${y + 0.5}h74" stroke-width="1.300"/>`)}
  <path d="M1163.500 186v39M1208.500 186v39M1329.500 186v39M1373 186v39M1403 186v39" stroke-width="1.400"/>
  <path d="M1086 205.500h56M1086 217h56M1157 186v32M1220 186v18h-9M1215 194h12M1244 194v30M1249 186v38M1267 186v34h6v-34M1276 205h32M1276 215h60M1292 186v19M1316 186v30M1326 186v32h3M1410 186v38M1414 186v38M1424 206v18M1431 206h-17"/>
  <path d="M1110 190l5 12 3-10M1128 204l4-16 5 12M1133 190l-4 12 8-8M1278 196l8 10M1304 198l-8 8"/>
  <path d="M1143 186v40M1149 186v40M1307 186v40M1312 186v40" stroke="#7c7a7d" stroke-width="1.400"/>
  ${range(188, 222, 4).map((y) => svg`<path d="M1143 ${y + 3}l6-4M1307 ${y + 3}l5-4" stroke="#7c7a7d"/>`)}
  <path d="M1086 222c30-3 50 3 90 0s60 2 100-1 80 3 154 2" stroke="#8a888b"/>
  <path d="M1086 225h344v5l-90 3-60-2-80 3-60-3-54 1z" fill="#9a989b" stroke="none"/>
  <path d="M1086 224h344M1086 231h350M1120 233h90M1230 232h190" stroke="#868487" stroke-width="1.500"/>
  <path d="M1086 236h353M1086 240.500h353"/><path d="M1086 248h353" stroke="#8d8b8e" stroke-width="1.800"/>
  <path d="M1097 243h2M1200 242h3M1262 245h5M1336 243h2"/>
  <path d="M1140.500 248v22h11v-22M1431 248v22h7" stroke-width="1.600"/></g>`;

const elevation = html`<svg class="sheet" width="100%" height="100%" fill="none" role="img" aria-label="East elevation">
  <defs><linearGradient id="dome" x1="0" y1="0" x2="1" y2="1"><stop offset="0" stop-color="#fff"/><stop offset=".5" stop-color="#ccc"/><stop offset="1" stop-color="#444"/></linearGradient></defs>
  <g transform="translate(-1086 -186)">
    ${roof}
    <g stroke=${L}>
      <path d="M1133.500 248v41M1159.500 248v41M1133.500 421v41M1159.500 421v41M1133.500 594v41M1159.500 594v41M1133.500 767v270M1159.500 767v270"/>
      <path d="M1423.500 248v163M1423.500 421v163M1423.500 594v166M1471.500 186v776"/>
      <path d="M1457 205.500h14M1237.500 767v238M1238 874.500h200" stroke="#bcbabd"/>
    </g>
    <g stroke=${G}>
      <path d="M1438.500 186v817" stroke-width="2"/><path d="M1453 186v818" stroke="#9a989b" stroke-width="2"/>
      <path d="M1450 186v826" stroke=${L}/><path d="M1446 186v826" stroke="#c3c1c5" stroke-width="3"/>
      <path d="M1438 906h-7v24h7" stroke-width="1.500"/>
    </g>
    ${[414, 587, 760].map((b) => svg`${slab(b)}${shaft(b)}${closet(b)}${sinkFront(1364, b)}${basin(1419, b)}`)}
    ${closet(900, true)}
    ${[414, 587, 760, 900].map(balcony)}
    <g stroke=${G} stroke-width="1.400"><rect x="1456" y="554" width="16" height="16"/><path d="M1456 573h24l4 3M1481 568h22M1484 553l12 30M1500 570l-16 18M1473 586v-12"/></g>
    ${door(1291, false)}${door(1346, true)}
    <g stroke=${G}>
      <path d="M1086 1011.500h353" stroke-width="1.400"/>
      <path d="M1471.500 1037V962.500h49V1037M1475 1037V969h43v68M1476 996.500h41M1477 1005h40M1477 1014h40M1477 1021h40M1477 1029h40" stroke-width="1.300"/>
      ${range(1479, 1515, 5).map((x) => svg`<path d="M${x}.5 964v33"/>`)}
    </g>
    ${sinkFront(1319, 1006)}${sinkFront(1361, 1006)}${basin(1262, 1006)}${basin(1419, 1006)}
    ${[1118, 1242, 1284].map((x) => sinkFront(x, 1051))}
    ${[1185, 1342, 1419].map((x) => basin(x, 1051))}
    <path d="M1242 1035v2M1284 1035v2M1353 1032c2-3 4-1 4 2M1360 1028l3-1v9" stroke="#111" stroke-width="1.800"/>
    <circle cx="1425" cy="1006" r="7.500" stroke="#222" stroke-width="1.300"/>
    <path d="M1410 1013h29v4h-29zM1430 1004l4 6-5 6 7 4-6 5 8 3M1427 1020l6 12M1433 1018v16M1437 1014v20M1424 1024l12 6" stroke="#111" stroke-width="1.500"/>
    ${basin(1166, 227)}${sinkFront(1236, 229)}
    <path d="M1146.500 202v13M1435.500 192v20" stroke="#111" stroke-width="1.500"/>
    <path d="M1146.500 228V1036M1435.500 228V1004" stroke="#111" stroke-width="1.500" stroke-dasharray="52 13 13 13"/>
    ${LEVELS.map(level)}
  </g></svg>`;

/* ---------- Claude window ---------- */

@customElement("claude-window")
class ClaudeWindow extends LitElement {
  static styles = css`
    :host { display: flex; flex-direction: column; min-width: 0; background: #252524; color: #c9c7c0; font-family: Inter, "Open Sans", sans-serif; border-top: 1px solid #6d6d6d; border-left: 1px solid #555; box-sizing: border-box; }
    svg { display: block; flex: none; }
    button { font: inherit; color: inherit; background: none; border: 0; padding: 0; display: flex; align-items: center; justify-content: center; }
    .bar { display: grid; grid-template-columns: 1fr auto 1fr; align-items: center; height: 32px; color: #fff; }
    .left, .right { display: flex; align-items: center; }
    .left { gap: 12px; padding-left: 12px; }
    .right { justify-content: flex-end; gap: 30px; padding-right: 14px; }
    .name { font-size: 11px; font-weight: 600; color: #8b8b88; }
    .tools { padding: 17px 11px 0; color: #b5b3ad; }
    .tools button { width: 40px; height: 32px; }
    .hero { display: flex; flex-direction: column; align-items: center; gap: 18px; padding-top: 82px; }
    h1 { margin: 0; font: 400 48px/56px "Liberation Serif", serif; color: #c5c3bd; }
    form { margin: 48px 14px 0 15px; padding: 19px 19px 20px; background: #30302e; border: 1px solid #3b3b39; border-radius: 20px; }
    textarea { display: block; width: 100%; height: 84px; box-sizing: border-box; border: 0; padding: 0; background: none; resize: none; outline: 0; font: 21px/32px Inter, "Open Sans", sans-serif; color: #ddd; }
    textarea::placeholder { color: #93918b; opacity: 1; }
    .row { display: flex; align-items: center; gap: 11px; }
    .sq, .pill { height: 43px; border: 1px solid #40403d; border-radius: 10px; box-sizing: border-box; }
    .sq { width: 43px; }
    .pill { gap: 6px; padding: 0 10px; font-size: 16px; }
    .on { width: 147px; justify-content: flex-start; background: #2b3440; border-color: #2c3f58; color: #3f82c9; }
    .model { display: flex; align-items: center; gap: 4px; margin-left: auto; color: #85837d; }
    select { appearance: none; border: 0; padding: 0; background: none; font: 22px/28px "Liberation Serif", serif; color: #dad8d2; outline: 0; }
    .send { width: 43px; height: 43px; margin-left: 14px; border-radius: 9px; background: #88493a; color: #c9a092; }
    .chips { display: flex; justify-content: center; gap: 11px; margin-top: 31px; }
    .chips button { height: 50px; box-sizing: border-box; gap: 11px; padding: 0 17px; border: 1px solid #3a3a38; border-radius: 9px; font-size: 19px; }
    .chips svg { color: #a3a19b; }
  `;
  render() {
    return html`
      <header class="bar">
        <div class="left"><button aria-label="Menu">${C.menu}</button>${sunburst(17)}</div>
        <span class="name">Claude — Control+Alt+Space</span>
        <div class="right"><button aria-label="Minimize">${C.min}</button><button aria-label="Maximize">${C.max}</button><button aria-label="Close">${C.close}</button></div>
      </header>
      <div class="tools"><button aria-label="Sidebar">${C.sidebar}</button></div>
      <div class="hero">${sunburst(44)}<h1>Evening, Kevin</h1></div>
      <form @submit=${(e: Event) => e.preventDefault()}>
        <textarea aria-label="Message" placeholder="How can I help you today?"></textarea>
        <div class="row">
          <button type="button" class="sq" aria-label="Add">${C.plus}</button>
          <button type="button" class="sq" aria-label="Tools">${C.sliders}</button>
          <button type="button" class="pill">${C.research}Research</button>
          <button type="button" class="pill on">${C.quill}Revit Pro ...</button>
          <span class="model"><select aria-label="Model"><option>Claude Sonnet 4</option></select>${C.down}</span>
          <button class="send" aria-label="Send">${C.up}</button>
        </div>
      </form>
      <nav class="chips">
        <button>${C.write}Write</button><button>${C.learn}Learn</button><button>${C.code}Code</button><button>${C.life}Life stuff</button>
      </nav>`;
  }
}

/* ---------- Revit window ---------- */

const QUICK = ["logo", "start", "open", "save", "sync", "^", "undo", "^", "redo", "^", "print", "pdf", "|", "dim", "|", "measure", "^", "aligned", "tag", "text", "|", "home", "^", "section", "thin", "|", "closeWin", "switchWin", "^", "^"];
const TABS = ["Architecture", "Structure", "Steel", "Precast", "Systems", "Insert", "Annotate", "Analyze", "Massing & Site", "Collaborate", "View", "Manage", "Add-Ins", "[N] Fabrication", "[N] MEP", "[N] Accelerate"];

@customElement("revit-window")
class RevitWindow extends LitElement {
  static styles = css`
    :host { display: grid; grid-template-rows: auto auto auto 25px minmax(0, 1fr) 24px; min-width: 0; min-height: 0; box-sizing: border-box; background: #f6f4f9; border-left: 2px solid #57535a; border-top: 1px solid #8d858c; border-bottom: 2px solid #8f8b90; font: 11px/16px "Open Sans", "Noto Sans", sans-serif; color: #3c3c40; }
    svg { display: block; flex: none; }
    button, select, input { font: inherit; color: inherit; background: none; border: 0; padding: 0; margin: 0; outline: 0; }
    button { display: flex; align-items: center; justify-content: center; }
    select { appearance: none; }

    .quick { display: flex; align-items: center; height: 28px; padding-left: 2px; background: #dbd7db; }
    .q { width: 24px; height: 24px; flex: none; }
    .c { width: 9px; flex: none; }
    .bar { width: 1px; height: 20px; margin: 0 2px 0 1px; background: #b9b6ba; flex: none; }
    .title { padding-left: 34px; flex: 1; white-space: nowrap; }
    .acct { display: flex; align-items: center; gap: 4px; padding-right: 50px; }
    .acct .bar { margin: 0 1px; }
    .acct .cartb { width: 18px; }
    .win { display: flex; padding-right: 2px; }

    .tabs { display: flex; align-items: center; gap: 17px; height: 19px; padding-left: 3px; background: #d7d5d8; white-space: nowrap; color: #4c4c50; }
    .file { width: 42px; height: 19px; background: #2071ae; color: #fff; margin-right: -5px; }
    .more { display: flex; align-items: center; gap: 7px; }

    .ribbon { display: grid; grid-template-columns: 54px 60px 75px 129px 53px 222px 63px 52px 76px 64px; padding-left: 3px; height: 91px; border-bottom: 1px solid #e2e0e5; background: #f8f6fb; }
    .panel { display: grid; grid-template-rows: 72px 19px; border-right: 1px solid #e9e7ec; min-width: 0; }
    .panel:last-child { border-right: 0; }
    .panel > footer { display: flex; align-items: center; justify-content: center; gap: 5px; }
    .body { display: flex; justify-content: center; align-items: flex-start; padding-top: 4px; }
    .big { flex-direction: column; gap: 1px; height: 66px; justify-content: flex-start; padding-top: 2px; box-sizing: border-box; }
    .big svg { height: 31px; }
    .sel { width: 42px; background: #dcecf8; border: 1px solid #b4d3ec; }
    .big .lbl { padding-top: 3px; }
    .big .cr svg { height: 5px; color: #888; }
    .off { color: #d4d2d7; }
    .two { display: grid; grid-template-rows: 34px 34px; justify-items: center; align-items: center; }
    .two button { width: 36px; height: 33px; }
    .hi { background: #dcecf8; outline: 1px solid #b4d3ec; outline-offset: -1px; }
    .cols { display: grid; grid-template-rows: repeat(3, 23px); grid-auto-flow: column; align-items: center; }
    .cols button { min-width: 23px; height: 22px; }
    .geo button.t { gap: 5px; justify-content: flex-start; }
    .geo { grid-template-columns: 64px 24px 22px 12px; }
    .mod { display: grid; grid-template-columns: repeat(4, 37px); grid-template-rows: 34px 34px; place-items: center; }
    .mod button { width: 34px; height: 32px; }
    .mod.pair { grid-template-columns: repeat(2, 37px); }
    .view { grid-template-columns: 24px 10px 24px; }
    .cr { width: 10px; display: flex; justify-content: center; }
    .meas { display: grid; grid-template-columns: 34px 10px; grid-template-rows: 34px 34px; place-items: center; }
    .fil { gap: 6px; }

    .work { display: grid; grid-template-columns: 346px minmax(0, 1fr); min-height: 0; }
    .dock { display: flex; flex-direction: column; min-height: 0; background: #fff; border-right: 4px solid #dcdadd; margin-left: 2px; }
    .dockhead { display: flex; align-items: center; justify-content: space-between; height: 18px; padding: 0 2px; background: #d5d3d6; color: #4c4c50; border-top: 1px solid #c5c3c6; box-sizing: border-box; }
    .dockhead span { white-space: nowrap; }
    .icons { display: flex; background: #cbc9cc; height: 22px; flex: none; color: #555; }
    .icons button { width: 22px; }
    .icons .act { background: #fff; width: 25px; }
    .find { display: flex; align-items: center; gap: 7px; height: 22px; margin: 9px 7px 10px 9px; padding: 0 7px; border: 1px solid #eeedef; color: #777; box-sizing: border-box; flex: none; }
    .find input { flex: 1; min-width: 0; }
    .find input::placeholder { color: #b2b0b4; }
    .treebox { display: grid; grid-template-columns: minmax(0, 1fr) 15px; flex: 1; min-height: 0; }
    .clip { overflow: hidden; min-height: 0; }
    .tree { display: grid; grid-auto-rows: 1fr; height: calc(100% + 17px); font-size: 14px; color: #3a3a3c; }
    .item { display: flex; align-items: center; min-height: 0; padding-left: 2px; }
    .item.hot { background: #f4f3f5; box-shadow: inset 0 0 0 1px #ebeaec; }
    .item.bold { font-weight: 700; color: #111; }
    .g, .tg { width: 20px; flex: none; align-self: stretch; display: flex; flex-direction: column; padding-left: 9px; box-sizing: border-box; }
    .g i { flex: 1; border-left: 1px dashed transparent; }
    .g.v i, .g.t i, .g.l i:first-child { border-left-color: #d0ced2; }
    .g.t i:first-child, .g.l i:first-child { border-bottom: 1px dashed #d0ced2; }
    .h { width: 20px; flex: none; border-top: 1px dashed #d0ced2; }
    .tg { padding: 0; align-items: center; justify-content: center; color: #888; }
    .ti { width: 20px; margin-left: 5px; display: flex; justify-content: center; color: #666; flex: none; }
    .tt { margin-left: 6px; white-space: nowrap; }
    .ti + .tt { margin-left: 5px; }
    .vs { display: flex; flex-direction: column; align-items: center; background: #ecebed; color: #8d8b90; min-height: 0; }
    .vs button { height: 14px; flex: none; }
    .thumb { width: 6px; border-radius: 3px; background: #8d8b8e; }
    .vs .rail { flex: 1; display: flex; flex-direction: column; align-items: center; min-height: 0; padding-top: 5px; }
    .vs .rail .thumb { height: 88%; }
    .docktabs { display: flex; height: 21px; flex: none; background: #cbc9cc; margin-right: -4px; color: #55555a; }
    .docktabs button { padding: 0 5px; white-space: nowrap; }
    .docktabs .act { background: #f6f4f9; }

    .doc { display: grid; grid-template-rows: 21px minmax(0, 1fr) 18px; min-height: 0; border-right: 3px solid #dcdadd; }
    .doctabs { display: flex; align-items: flex-end; justify-content: space-between; background: #cbc9cc; border-top: 1px solid #bbb9bc; padding-right: 4px; box-sizing: border-box; color: #666; }
    .doctab { display: flex; align-items: center; gap: 8px; width: 120px; height: 18px; padding: 0 5px; box-sizing: border-box; background: #fff; font-weight: 700; color: #555; }
    .doctab .x { margin-left: auto; }
    .end { height: 18px; }
    .stage { display: grid; grid-template-columns: minmax(0, 1fr) 16px; min-height: 0; background: #fff; padding-left: 2px; }
    .canvas { position: relative; min-height: 0; overflow: hidden; }
    .sheet { position: absolute; inset: 0; }
    .sheet text { font: 18px "Liberation Sans", Arial, sans-serif; fill: #111; }
    .nav { position: absolute; right: 0; top: 2px; width: 33px; height: 109px; box-sizing: border-box; border: 1px solid #b3b1b5; border-radius: 4px; background: #f6f5f7; color: #a7a5a9; display: flex; flex-direction: column; align-items: center; }
    .stage .rail { justify-content: center; padding: 4px 0 0; }
    .stage .vs .rail .thumb { height: 16px; }
    .ctl { display: flex; align-items: center; background: #f4f3f6; padding-left: 13px; color: #444; }
    .ctl .scale { width: 63px; white-space: nowrap; }
    .ctl .icons2 { display: grid; grid-template-columns: repeat(11, 1fr); width: 269px; }
    .hs { display: flex; flex: 1; align-items: center; height: 14px; background: #ebeaec; margin-left: 4px; justify-content: center; }
    .hs .thumb { width: 16px; height: 8px; border-radius: 4px; margin-right: 6px; }
    .grip { width: 20px; display: flex; justify-content: flex-end; }

    .status { display: flex; align-items: center; padding: 0 87px 0 4px; color: #4c4c50; }
    .status .gap { flex: 1; }
    .st1 { width: 194px; }
    .st2 { width: 205px; }
    .st3 { display: flex; align-items: center; color: #a3a1a6; }
    .combo { width: 182px; display: flex; align-items: center; justify-content: space-between; font-size: 12px; color: #b4b2b7; margin-left: 9px; }
    .sico { display: flex; gap: 8px; align-items: center; }
    .filt { display: flex; align-items: center; gap: 2px; }
    .ab { width: 24px; }
  `;

  private small(names: string[]) {
    return names.map((n) => html`<button aria-label=${n}>${R[n]}</button>`);
  }
  private panel(label: string, body: TemplateResult) {
    return html`<section class="panel"><div class="body">${body}</div><footer>${label}</footer></section>`;
  }
  private row(r: Row) {
    const toggle = r.tog === "-" ? icon(10, 10, svg`<path d="M0 5h10" stroke-width="2"/>`) : icon(10, 10, svg`<path d="M0 5h10M5 0v10" stroke-width="2"/>`);
    const guides = r.ic === "view" ? r.g.slice(0, 4) : r.g;
    return html`<div class=${classMap({ item: true, hot: !!r.hot, bold: !!r.bold })} role="treeitem" aria-level=${r.g.length + 1}>
      ${[...guides].map((g) => html`<span class="g ${g === "." ? "" : g}"><i></i><i></i></span>`)}
      ${r.ic === "view" ? html`<span class="h"></span>` : nothing}
      ${r.tog ? html`<button class="tg" aria-label="Toggle ${r.label}">${toggle}</button>` : nothing}
      ${r.ic ? html`<span class="ti">${P[r.ic]}</span>` : nothing}
      <span class="tt">${r.label}</span></div>`;
  }
  render() {
    const cr = html`<button class="cr" aria-label="More">${caret}</button>`;
    const x = icon(9, 9, svg`<path d="M1 1l7 7M8 1L1 8" stroke="#777" stroke-width="1.400"/>`);
    const upA = icon(9, 6, svg`<path d="M1 5l3.500-3.500L8 5" stroke-width="1.500"/>`);
    const dnA = icon(9, 6, svg`<path d="M1 1l3.500 3.500L8 1" stroke-width="1.500"/>`);
    return html`
      <header class="quick">
        ${QUICK.map((k) => k === "|" ? html`<span class="bar"></span>` : k === "^" ? html`<button class="c" aria-label="More">${caret}</button>` : html`<button class="q" aria-label=${k}>${Q[k]}</button>`)}
        <span class="title">SNOWDON_MEP_R25.rvt - Elevation: East - Mech</span>
        <div class="acct">
          ${icon(5, 8, svg`<path d="M4.500 .5v7L.5 4z" fill="#333" stroke="none"/>`)}
          <button class="q" aria-label="Find">${Q.binoc}</button>
          ${Q.user}<span>KevinPhillipsS...</span>${caret}
          <button class="q cartb" aria-label="Store">${Q.cart}</button><span class="bar"></span>
          ${Q.help}${caret}
        </div>
        <div class="win"><button class="q" aria-label="Minimize">${Q.wmin}</button><button class="q" aria-label="Restore">${Q.wmax}</button><button class="q" aria-label="Close">${Q.wclose}</button></div>
      </header>
      <nav class="tabs">
        <button class="file">File</button>
        ${TABS.map((t) => html`<button>${t}</button>`)}
        <span class="more">${icon(10, 8, svg`<path d="M0 0l5 4-5 4zM5 0l5 4-5 4z" fill="#333" stroke="none"/>`)}${icon(16, 10, svg`<rect x="1" y="1" width="14" height="8" rx="3" fill="#fff"/><path d="M5.500 6.500L8 3.500l2.500 3z" fill="#333" stroke="none"/>`)}${caret}</span>
      </nav>
      <div class="ribbon">
        <section class="panel"><div class="body"><button class="big sel">${R.modify}<span class="lbl">Modify</span></button></div><footer>Select ${caret}</footer></section>
        ${this.panel("Properties", html`<div class="two"><button aria-label="Type properties">${R.families}</button><button class="hi" aria-label="Properties">${R.props}</button></div>`)}
        ${this.panel("Clipboard", html`<button class="big off">${R.paste}<span class="lbl">Paste</span><span class="cr">${caret}</span></button><div class="cols">${this.small(["cut", "copyS", "match"])}</div>`)}
        ${this.panel("Geometry", html`<div class="cols geo">
          <button class="t">${R.cope}Cope ${caret}</button><button class="t">${R.cutG}Cut ${caret}</button><button class="t">${R.joinG}Join ${caret}</button>
          ${this.small(["g1", "g2", "g3", "g4", "g5", "hammer"])}<span></span>${cr}<span></span></div>`)}
        ${this.panel("Controls", html`<button class="big">${R.activate}<span class="lbl">Activate</span></button>`)}
        ${this.panel("Modify", html`<div class="mod">${this.small(["align", "offset", "mirrorP", "mirrorD", "move", "copy", "rotate", "trim"])}</div><div class="cols">${this.small(["s1", "s4", "s7", "s2", "s5", "s8", "s3", "s6", "s9"])}</div>`)}
        ${this.panel("View", html`<div class="cols view">${this.small(["bulb", "brush", "cube"])}${cr}${cr}<span></span>${this.small(["box", "linew"])}<span></span></div>`)}
        ${this.panel("Measure", html`<div class="meas"><button aria-label="Measure">${R.ruler}</button>${cr}<button aria-label="Dimension">${R.diag}</button>${cr}</div>`)}
        ${this.panel("Create", html`<div class="mod pair">${this.small(["create1", "create2", "create3", "create4"])}</div>`)}
        ${this.panel("Naviate", html`<div class="cols"><span></span><button class="fil">${R.funnel}Fil.</button></div>`)}
      </div>
      <div></div>
      <div class="work">
        <aside class="dock">
          <div class="dockhead"><span>Project Browser - SNOWDON_MEP_R25.rvt</span><button aria-label="Close browser">${x}</button></div>
          <div class="icons">${["house", "views", "legend", "schedule", "sheet", "family", "group", "link"].map((n, i) => html`<button class=${i ? "" : "act"} aria-label=${n}>${P[n]}</button>`)}</div>
          <label class="find">${P.search}<input type="search" placeholder="Search" aria-label="Search" /></label>
          <div class="treebox">
            <div class="clip"><div class="tree" role="tree">${ROWS.map((r) => this.row(r))}</div></div>
            <div class="vs"><button aria-label="Scroll up">${upA}</button><div class="rail"><div class="thumb"></div></div><button aria-label="Scroll down">${dnA}</button></div>
          </div>
          <div class="docktabs"><button class="act">Project Browser - SNOWDON_MEP_R25.rvt</button><button>Properties</button></div>
        </aside>
        <main class="doc">
          <div class="doctabs"><div class="doctab">${icon(14, 13, svg`<path d="M0 7l7-6.500L14 7z" fill="#444" stroke="none"/><path d="M3 7v5.500h8V7" stroke-width="1.300"/>`)}<span>East - Mech</span><button class="x" aria-label="Close view">${x}</button></div>
            <span class="end">${icon(9, 12, svg`<path d="M1 5h7M1 7.500h7L4.500 11z" fill="#777"/>`)}</span></div>
          <div class="stage">
            <div class="canvas">${elevation}
              <div class="nav">${icon(31, 107, svg`
                <circle cx="25" cy="5" r="3"/><circle cx="25" cy="102" r="3"/>
                <path d="M13 20h7c2 0 3 1 3 3v8M13 20c-5 0-8 4-8 9s4 9 10 9" stroke-width="1.500"/><rect x="10" y="25" width="8" height="8" rx="2" stroke-width="1.300"/>
                <text x="16" y="41" font-size="8" font-weight="700" fill="#999" stroke="none">2D</text>
                <path d="M13 47h5l-2.500 3zM13 86h5l-2.500 3z" fill="#999" stroke="none"/><path d="M4 53.500h24" stroke="#bbb"/>
                <rect x="8" y="61" width="11" height="11" fill="#c9c7c0" stroke="none"/><circle cx="18.500" cy="71.500" r="3"/><path d="M21 74l3 3" stroke-width="1.500"/>`)}</div>
            </div>
            <div class="vs"><button aria-label="Scroll up">${upA}</button><div class="rail"><div class="thumb"></div></div><button aria-label="Scroll down">${dnA}</button></div>
          </div>
          <div class="ctl"><span class="scale">1/8" = 1'-0"</span><div class="icons2">${V.map((v, i) => html`<button aria-label="View control ${i + 1}">${v}</button>`)}</div>
            ${icon(6, 9, svg`<path d="M5 1L1.500 4.500 5 8" stroke-width="1.300"/>`)}
            <div class="hs"><div class="thumb"></div></div>
            ${icon(6, 9, svg`<path d="M1 1l3.500 3.500L1 8" stroke-width="1.500"/>`)}<span class="grip">${icon(8, 8, svg`<path d="M5 1h2M5 6h2M1 6h2" stroke="#999" stroke-width="2"/>`)}</span></div>
        </main>
      </div>
      <footer class="status">
        <span class="st1">Ready</span>
        <span class="st2">${icon(18, 16, svg`<path d="M2 4l4-2v11l-4-2z" fill="#b56a72" stroke="none"/><path d="M7 2l4 2v10l-4-1z" fill="#4fae8c" stroke="none"/><path d="M11 6l4-2v5l-3 5z" fill="#3f8fbf" stroke="none"/><path d="M3 11l6 3 7-3M14 9l2 2-2 2" stroke="#3a9a86"/>`)}</span>
        <span class="st3">${icon(9, 6, svg`<path d="M1 1l3.500 3.500L8 1" stroke="#bbb"/>`)}&emsp;${icon(16, 14, svg`<circle cx="5" cy="5" r="2.500"/><path d="M1 13c0-5 8-5 8 0zM8 1h6v4h-3l-2 2V5H8z"/>`)}<span>:0</span></span>
        <span class="ab"></span>
        ${icon(16, 15, svg`<rect x="1" y="1" width="14" height="13" stroke-width="1.300"/><path d="M3 4.500h2M7 4.500h6M3 7.500h2M7 7.500h6M3 10.500h2M7 10.500h6" stroke-width="1.300"/>`)}
        &emsp;${icon(15, 15, svg`<path d="M4 6V1h10v12H8M7 4h5M7 7h5M1 9h6M5 7l2 2-2 2M3 12h5" stroke="#aaa"/>`)}
        <label class="combo"><select aria-label="Active design option"><option>Main Model</option></select>${icon(9, 6, svg`<path d="M1 1l3.500 3.500L8 1" stroke="#bbb"/>`)}</label>
        <span class="gap"></span>
        <div class="sico">${S.map((s, i) => html`<button aria-label="Selection option ${i + 1}">${s}</button>`)}<span class="filt">${icon(16, 16, svg`<path d="M1 1h14L9.500 8v7L6.500 13V8z" fill="#c9c7cc" stroke="#777"/>`)}:0</span></div>
      </footer>`;
  }
}

@customElement("app-root")
class AppRoot extends LitElement {
  static styles = css`
    :host { display: grid; grid-template-columns: 23fr 37fr; grid-template-rows: minmax(0, 1fr); height: 100vh; min-height: 640px; overflow: hidden; }
  `;
  render() {
    return html`<claude-window></claude-window><revit-window></revit-window>`;
  }
}
